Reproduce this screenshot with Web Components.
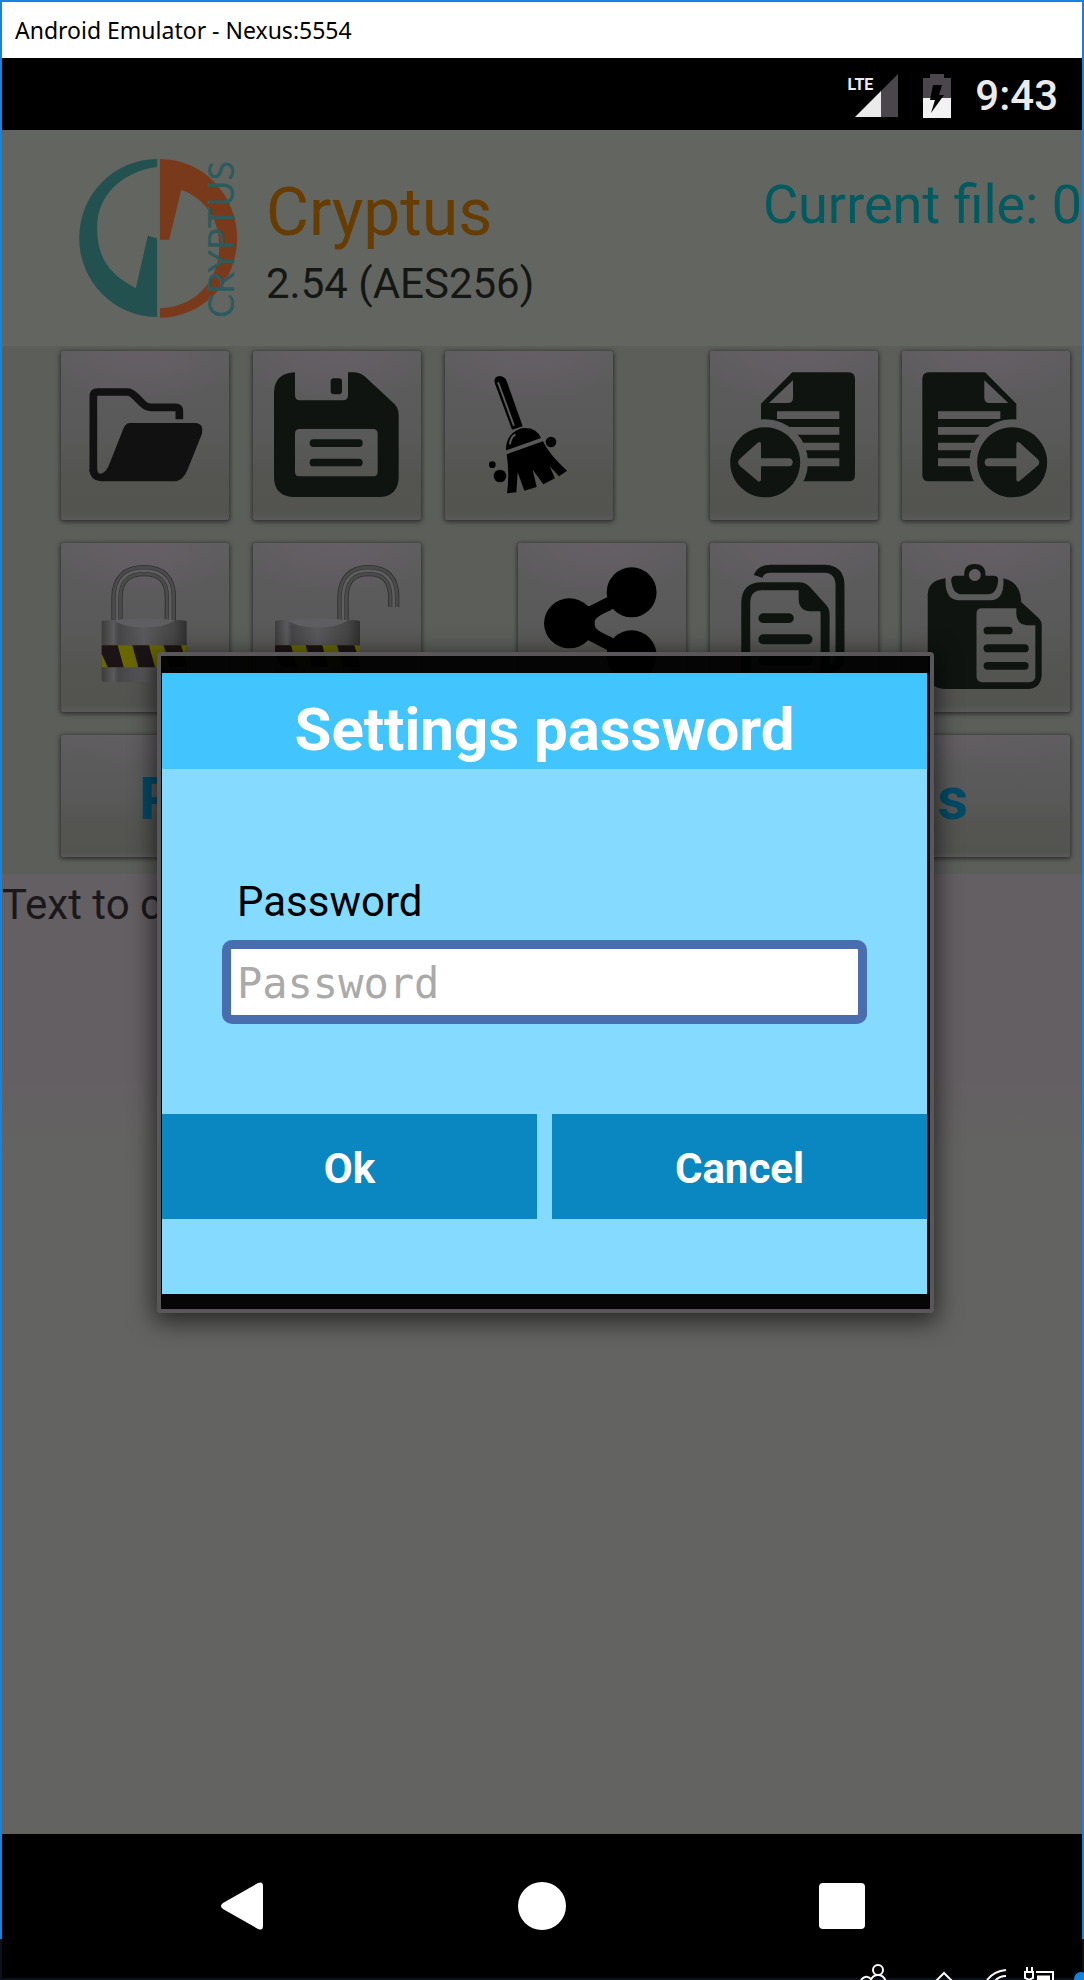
<!DOCTYPE html>
<html lang="en">
<head>
<meta charset="utf-8">
<meta name="viewport" content="width=device-width, initial-scale=1">
<title>Android Emulator - Nexus:5554</title>
<style>
  body {
    margin: 0;
    min-height: 100vh;
    display: flex;
    flex-direction: column;
    background: #000;
    font-family: Roboto, "Liberation Sans", sans-serif;
  }

  emulator-window {
    flex: 1;
  }
</style>
</head>
<body>
  <emulator-window label="Android Emulator - Nexus:5554">
    <status-bar slot="status" network="LTE" time="9:43"></status-bar>
    <app-header name="Cryptus" version="2.54 (AES256)" current="Current file: 0"></app-header>
    <tool-bar>
      <tool-row>
        <icon-button icon="open" label="Open"></icon-button>
        <icon-button icon="save" label="Save"></icon-button>
        <icon-button icon="clear" label="Clear"></icon-button>
        <icon-button icon="previous" label="Previous" class="push"></icon-button>
        <icon-button icon="next" label="Next"></icon-button>
      </tool-row>
      <tool-row>
        <icon-button icon="lock" label="Encrypt"></icon-button>
        <icon-button icon="unlock" label="Decrypt"></icon-button>
        <icon-button icon="share" label="Share" class="push"></icon-button>
        <icon-button icon="copy" label="Copy"></icon-button>
        <icon-button icon="paste" label="Paste"></icon-button>
      </tool-row>
      <tool-row>
        <text-button>P</text-button>
        <text-button align="end">s</text-button>
      </tool-row>
    </tool-bar>
    <text-pane>Text to c</text-pane>
    <password-dialog slot="dialog" heading="Settings password"></password-dialog>
    <nav-bar slot="nav"></nav-bar>
  </emulator-window>
  <task-tray></task-tray>

<script>
  const icons = {
    open: `
      <svg viewBox="35 32 504 507" fill="#111">
        <path d="M390 237V212Q390 201 378 201H305Q290 201 278 188L258 168Q246 155 234 155H145Q132 155 132 168V394" fill="none" stroke="#111" stroke-width="23"/>
        <path d="M243 248H440Q464 250 458 280L414 390Q400 423 374 423H154Q122 420 120 388H144Q144 400 154 400Q170 398 180 372L222 265Q228 248 243 248Z"/>
      </svg>`,
    save: `
      <svg viewBox="610 32 504 507" fill="#0f1410">
        <path fill-rule="evenodd" d="M736 96V165Q736 180 750 180H880Q895 180 895 165V96H910Q930 96 945 108L1035 192Q1047 205 1047 225V412Q1045 468 988 470H730Q673 466 673 410V155Q676 98 736 96ZM750 266Q736 266 736 280V394Q736 408 750 408H970Q984 408 984 394V280Q984 266 970 266Z"/>
        <rect x="843" y="114" width="34" height="48" rx="10"/>
        <rect x="780" y="297" width="159" height="23" rx="11"/>
        <rect x="780" y="355" width="159" height="23" rx="11"/>
      </svg>`,
    clear: `
      <svg viewBox="46 32 504 507">
        <path d="M196 130Q190 109 210 107Q226 108 231 122L279 258L247 268Z"/>
        <path d="M206 128L252 254" stroke="#595959" stroke-width="6" stroke-linecap="round"/>
        <path d="M229 330Q228 280 275 264Q318 258 334 293Z"/>
        <path d="M241 312Q242 292 257 282" fill="none" stroke="#595959" stroke-width="6"/>
        <path d="M231 342L340 303Q360 345 412 391L388 408L360 378L376 414L341 432L309 388L321 440L284 451L264 396L260 456L232 459Q240 400 231 342Z"/>
        <circle cx="364" cy="305" r="16"/>
        <circle cx="188" cy="373" r="10"/>
        <circle cx="211" cy="407" r="19"/>
      </svg>`,
    previous: `
      <svg viewBox="60 32 504 507">
        ${pageWithArrow()}
      </svg>`,
    next: `
      <svg viewBox="635 32 504 507">
        <g transform="translate(1191 0) scale(-1 1)">${pageWithArrow()}</g>
      </svg>`,
    lock: `
      <svg viewBox="35 38 504 507">
        ${shackle("M203 272V200Q205 121 284 121Q363 121 363 200V272")}
        ${lockBody(157)}
      </svg>`,
    unlock: `
      <svg viewBox="610 38 504 507">
        ${shackle("M880 272V200Q882 121 957 121Q1032 121 1032 200V230")}
        ${lockBody(676)}
      </svg>`,
    share: `
      <svg viewBox="48 38 451 507" preserveAspectRatio="none">
        <path d="M353 186L186 279L353 375" fill="none" stroke="#000" stroke-width="38"/>
        <path d="M225 225L300 238Q252 258 252 279Q254 304 302 322L225 330Z"/>
        <ellipse cx="353" cy="186" rx="67" ry="75"/>
        <ellipse cx="186" cy="279" rx="68" ry="75"/>
        <ellipse cx="353" cy="375" rx="67" ry="75"/>
      </svg>`,
    copy: `
      <svg viewBox="563 38 451 507" preserveAspectRatio="none" fill="#0f1410">
        <g fill="none" stroke="#0f1410" stroke-width="24">
          <path d="M692 138Q700 115 725 115H872Q912 118 912 165V380Q912 416 875 416"/>
          <path d="M659 440V215Q661 168 702 168H802Q814 168 824 180L866 232Q872 240 872 252V440"/>
        </g>
        <path d="M801 170L870 243H832Q801 240 801 205Z"/>
        <rect x="693" y="249" width="95" height="29" rx="14"/>
        <rect x="693" y="312" width="145" height="30" rx="14"/>
        <rect x="693" y="375" width="145" height="30" rx="14"/>
      </svg>`,
    paste: `
      <svg viewBox="1078 38 451 507" preserveAspectRatio="none" fill="#0f1410">
        <path fill-rule="evenodd" d="M1195 144Q1192 210 1232 210H1316Q1354 208 1350 144Q1396 155 1398 215L1444 262Q1453 272 1453 285V436Q1450 474 1415 476H1190Q1147 470 1147 425V190Q1150 150 1195 144ZM1293 234Q1278 234 1278 250V440Q1280 455 1293 456H1420Q1434 455 1436 440V285H1412Q1386 282 1385 250V234Z"/>
        <path fill-rule="evenodd" d="M1220 136H1245Q1243 102 1273 101Q1304 102 1302 136H1326Q1338 138 1336 152Q1332 192 1308 192H1236Q1214 190 1210 150Q1210 138 1220 136ZM1273 116A16 18 0 1 0 1274 116Z"/>
        <rect x="1297" y="289" width="78" height="23" rx="11"/>
        <rect x="1297" y="342" width="121" height="24" rx="11"/>
        <rect x="1297" y="395" width="121" height="23" rx="11"/>
      </svg>`
  };

  function pageWithArrow() {
    return `
      <mask id="page-cut" maskUnits="userSpaceOnUse" x="60" y="32" width="504" height="507">
        <rect x="60" y="32" width="504" height="507" fill="#fff"/>
        <path d="M309 120V172Q309 188 293 188H237Z"/>
        <path d="M261 213H448V236H261ZM261 260H448V283H261ZM261 307H448V330H261ZM261 354H448V378H261Z"/>
        <circle cx="225" cy="366" r="129"/>
      </mask>
      <path mask="url(#page-cut)" fill="#0f1410" d="M307 96H475Q495 96 495 116V403Q495 423 475 423H213V190Z"/>
      <path fill="#0f1410" fill-rule="evenodd" d="M225 261A105 105 0 1 0 226 261ZM144 366Q144 360 150 355L203 307Q213 302 213 312V354H298Q308 356 308 366Q308 377 298 378H213V418Q211 427 203 422L150 377Q144 372 144 366Z"/>`;
  }

  function shackle(d) {
    return `
      <g fill="none">
        <path d="${d}" stroke="#303030" stroke-width="34"/>
        <path d="${d}" stroke="#4b4b4b" stroke-width="29"/>
        <path d="${d}" stroke="#2e2e2e" stroke-width="11"/>
        <path d="${d}" stroke="#5e5e5e" stroke-width="8"/>
      </g>`;
  }

  // body is 255 wide; x is its left edge
  function lockBody(x) {
    return `
      <linearGradient id="steel">
        <stop offset="0" stop-color="#3c3c3c"/>
        <stop offset=".14" stop-color="#5a5a5c"/>
        <stop offset=".2" stop-color="#454547"/>
        <stop offset=".5" stop-color="#59595b"/>
        <stop offset=".85" stop-color="#454545"/>
        <stop offset="1" stop-color="#303030"/>
      </linearGradient>
      <g transform="translate(${x} 0)">
        <path fill="url(#steel)" d="M0 272Q40 264 60 278Q130 302 200 278Q220 264 255 272V448Q255 455 248 455H7Q0 455 0 448Z"/>
        <path fill="#5e5d60" d="M35 270Q128 258 220 270Q190 292 128 292Q65 292 35 270Z"/>
        <rect y="345" width="255" height="66" fill="#686700"/>
        <path fill="#1b1316" d="M0 345H48L66 411H18L0 370ZM92 345H142L160 411H110ZM186 345H238L255 400V411H204Z"/>
      </g>`;
  }

  class EmulatorWindow extends HTMLElement {
    constructor() {
      super();
      this.attachShadow({ mode: "open" });
    }

    connectedCallback() {
      this.shadowRoot.innerHTML = `
        <style>
          :host {
            display: flex;
            flex-direction: column;
            border: 2px solid #1783dc;
            border-bottom: 0;
          }

          .title {
            padding: 12px 13px;
            background: #fff;
            color: #000;
            font: 23px/32px "Noto Sans", "Open Sans", sans-serif;
          }

          .screen {
            position: relative;
            flex: 1;
            display: flex;
            flex-direction: column;
            overflow: hidden;
          }
        </style>

        <div class="title">${this.getAttribute("label")}</div>
        <slot name="status"></slot>
        <div class="screen">
          <slot></slot>
          <slot name="dialog"></slot>
        </div>
        <slot name="nav"></slot>
      `;
    }
  }

  class StatusBar extends HTMLElement {
    constructor() {
      super();
      this.attachShadow({ mode: "open" });
    }

    connectedCallback() {
      this.shadowRoot.innerHTML = `
        <style>
          :host {
            display: flex;
            align-items: center;
            justify-content: flex-end;
            gap: 24px;
            box-sizing: border-box;
            height: 72px;
            padding: 3px 24px 0 0;
            background: #000;
            color: #ebebeb;
          }

          svg {
            display: block;
          }

          .signal {
            display: flex;
            align-items: flex-start;
            margin-right: 1px;
          }

          .network {
            margin-right: -18px;
            font-size: 16px;
            font-weight: 700;
            line-height: 22px;
          }

          time {
            font-size: 42px;
            font-weight: 500;
            line-height: 50px;
          }
        </style>

        <div class="signal">
          <span class="network">${this.getAttribute("network")}</span>
          <svg width="43" height="43" viewBox="0 0 43 43">
            <path d="M43 0V43H26V17Z" fill="#4b464b"/>
            <path d="M26 17V43H0Z" fill="#ebebeb"/>
          </svg>
        </div>
        <svg width="28" height="44" viewBox="0 0 28 44">
          <path d="M7 0H21V4H28V24H0V4H7Z" fill="#4b464b"/>
          <path d="M0 24H28V44H0Z" fill="#f2f2f2"/>
          <path d="M10 11H19L16 21H21L8 39L12 26H7Z" fill="#000"/>
        </svg>
        <time>${this.getAttribute("time")}</time>
      `;
    }
  }

  class AppHeader extends HTMLElement {
    constructor() {
      super();
      this.attachShadow({ mode: "open" });
    }

    connectedCallback() {
      this.shadowRoot.innerHTML = `
        <style>
          :host {
            display: flex;
            align-items: flex-start;
            gap: 29px;
            padding: 29px 0 28px 77px;
            background: #636561;
            white-space: nowrap;
          }

          svg {
            flex: none;
            overflow: visible;
          }

          .names {
            padding-top: 16px;
          }

          h1, p {
            margin: 0;
            font-weight: 400;
          }

          h1 {
            margin-bottom: 8px;
            color: #673c00;
            font-size: 66px;
            line-height: 76px;
          }

          p {
            color: #141714;
            font-size: 42px;
            line-height: 50px;
          }

          .current {
            margin-left: auto;
            padding-top: 14px;
            color: #005a60;
            font-size: 54px;
            line-height: 64px;
          }
        </style>

        <svg width="158" height="159" viewBox="0 0 158 159">
          <g transform="scale(.355 .334) translate(-220 -478)">
            <path fill="#225150" d="M440 478A219 236 0 0 0 440 951V716L414 707L380 865C300 820 271 770 271 680C271 590 340 515 440 502Z"/>
            <path fill="#793a1b" d="M448 478A217 237 0 0 1 448 953V925C560 920 615 830 615 740C615 650 570 595 508 570L474 720H448Z"/>
          </g>
          <text transform="translate(155 159) rotate(-90)" font-family="Lato, sans-serif" font-size="36" fill="#2d5a5c">CRYPTUS</text>
        </svg>
        <div class="names">
          <h1>${this.getAttribute("name")}</h1>
          <p>${this.getAttribute("version")}</p>
        </div>
        <p class="current">${this.getAttribute("current")}</p>
      `;
    }
  }

  class ToolBar extends HTMLElement {
    constructor() {
      super();
      this.attachShadow({ mode: "open" });
      this.shadowRoot.innerHTML = `
        <style>
          :host {
            display: flex;
            flex-direction: column;
            gap: 23px;
            padding: 5px 12px 17px 59px;
            background: #5c5e5a;
          }
        </style>
        <slot></slot>
      `;
    }
  }

  class ToolRow extends HTMLElement {
    constructor() {
      super();
      this.attachShadow({ mode: "open" });
      this.shadowRoot.innerHTML = `
        <style>
          :host {
            display: flex;
            gap: 24px;
          }

          ::slotted(.push) {
            margin-left: auto;
          }
        </style>
        <slot></slot>
      `;
    }
  }

  const raised = `
    border: 0;
    border-radius: 3px;
    background:
      radial-gradient(ellipse 60% 30% at 50% 0, #665f66, transparent),
      linear-gradient(#5e5d5e, #595959 50%, #545551 75%, #535450 96%, #5a5a5a);
    box-shadow: 0 1px 4px 1px rgba(0, 0, 0, .5);
  `;

  class IconButton extends HTMLElement {
    constructor() {
      super();
      this.attachShadow({ mode: "open" });
    }

    connectedCallback() {
      this.shadowRoot.innerHTML = `
        <style>
          :host {
            display: block;
          }

          button {
            ${raised}
            display: block;
            width: 168px;
            height: 169px;
            padding: 0;
          }

          svg {
            display: block;
            width: 100%;
            height: 100%;
          }
        </style>

        <button type="button" aria-label="${this.getAttribute("label")}">
          ${icons[this.getAttribute("icon")]}
        </button>
      `;
    }
  }

  class TextButton extends HTMLElement {
    constructor() {
      super();
      this.attachShadow({ mode: "open" });
      this.shadowRoot.innerHTML = `
        <style>
          :host {
            display: block;
            flex: 1;
          }

          button {
            ${raised}
            display: block;
            width: 100%;
            height: 122px;
            padding: 6px 102px 0 78px;
            color: #004b66;
            font: 700 60px/70px Roboto, sans-serif;
            text-align: left;
          }

          :host([align="end"]) button {
            text-align: right;
          }
        </style>
        <button type="button"><slot></slot></button>
      `;
    }
  }

  class TextPane extends HTMLElement {
    constructor() {
      super();
      this.attachShadow({ mode: "open" });
      this.shadowRoot.innerHTML = `
        <style>
          :host {
            display: block;
            flex: 1;
            padding: 6px 0;
            background: linear-gradient(#645f63 200px, #636461 290px);
            color: #1a181a;
            font-size: 42px;
            line-height: 50px;
          }
        </style>
        <slot></slot>
      `;
    }
  }

  class PasswordDialog extends HTMLElement {
    constructor() {
      super();
      this.attachShadow({ mode: "open" });
    }

    connectedCallback() {
      this.shadowRoot.innerHTML = `
        <style>
          :host {
            position: absolute;
            inset: 0;
            display: grid;
            align-items: center;
            padding: 0 148px 0 155px;
          }

          .frame {
            padding: 17px 3px 15px 1px;
            border: 4px solid #5a575a;
            border-radius: 4px;
            background: rgba(0, 0, 0, .94);
            background-clip: padding-box;
            box-shadow: 0 6px 24px 3px rgba(0, 0, 0, .6);
          }

          h2 {
            margin: 0;
            padding: 22px 0 4px;
            background: #42c5ff;
            color: #fff;
            font-size: 60px;
            line-height: 70px;
            text-align: center;
          }

          form {
            padding: 108px 0 75px;
            background: #84daff;
          }

          .field {
            display: flex;
            flex-direction: column;
            gap: 13px;
            padding: 0 60px 90px;
          }

          label {
            padding-left: 15px;
            color: #000;
            font-size: 42px;
            line-height: 50px;
          }

          input {
            box-sizing: border-box;
            width: 100%;
            height: 84px;
            padding: 3px 6px 0;
            border: 9px solid #496eaf;
            border-radius: 10px;
            background: #fff;
            color: #000;
            font: 42px "DejaVu Sans Mono", monospace;
          }

          input::placeholder {
            color: #aaa;
          }

          .actions {
            display: flex;
            gap: 15px;
          }

          .actions button {
            flex: 1;
            height: 105px;
            padding: 6px 0 0;
            border: 0;
            background: #0a86c0;
            color: #fff;
            font: 700 42px/50px Roboto, sans-serif;
          }
        </style>

        <div class="frame" role="dialog" aria-labelledby="heading">
          <h2 id="heading">${this.getAttribute("heading")}</h2>
          <form>
            <div class="field">
              <label for="password">Password</label>
              <input id="password" type="password" placeholder="Password">
            </div>
            <div class="actions">
              <button type="button">Ok</button>
              <button type="button">Cancel</button>
            </div>
          </form>
        </div>
      `;
    }
  }

  class NavBar extends HTMLElement {
    constructor() {
      super();
      this.attachShadow({ mode: "open" });
      this.shadowRoot.innerHTML = `
        <style>
          :host {
            display: flex;
            justify-content: center;
            gap: 252px;
            padding: 48px 0 9px;
            background: #000;
          }

          button {
            padding: 0;
            border: 0;
            background: none;
          }

          svg {
            display: block;
          }
        </style>

        <button type="button" aria-label="Back">
          <svg width="48" height="48" fill="#fff"><path d="M5 21L40 1Q45 -1 45 4V44Q45 49 40 47L5 27Q1 24 5 21Z"/></svg>
        </button>
        <button type="button" aria-label="Home">
          <svg width="48" height="48" fill="#fff"><circle cx="24" cy="24" r="24"/></svg>
        </button>
        <button type="button" aria-label="Overview">
          <svg width="48" height="48" fill="#fff"><rect x="1" y="1" width="46" height="46" rx="4"/></svg>
        </button>
      `;
    }
  }

  class TaskTray extends HTMLElement {
    constructor() {
      super();
      this.attachShadow({ mode: "open" });
      this.shadowRoot.innerHTML = `
        <style>
          :host {
            display: flex;
            justify-content: flex-end;
            align-items: flex-end;
            height: 41px;
            background: linear-gradient(#000 39px, #07121c 39px);
            box-shadow: inset 2px 0 #07121c, inset -2px 0 #07121c;
            overflow: hidden;
          }

          svg {
            display: block;
          }
        </style>

        <svg width="224" height="17" viewBox="860 1963 224 17" fill="none" stroke="#fff" stroke-width="2">
          <circle cx="878" cy="1970" r="5"/>
          <path d="M870 1982Q872 1975 878 1975T886 1982M861 1980Q866 1974 871 1979"/>
          <path d="M936 1981L944 1973L952 1981"/>
          <path d="M987 1980Q994 1971 1006 1970M995 1981Q999 1976 1006 1976"/>
          <path d="M1027 1967V1972M1032 1967V1972M1025 1972H1033V1978L1029 1980L1025 1978ZM1036 1972H1053V1980"/>
          <path d="M1037 1978H1050" stroke-width="5"/>
          <circle cx="1081" cy="1979" r="6" fill="#1783dc" stroke="#1783dc"/>
        </svg>
      `;
    }
  }

  customElements.define("emulator-window", EmulatorWindow);
  customElements.define("status-bar", StatusBar);
  customElements.define("app-header", AppHeader);
  customElements.define("tool-bar", ToolBar);
  customElements.define("tool-row", ToolRow);
  customElements.define("icon-button", IconButton);
  customElements.define("text-button", TextButton);
  customElements.define("text-pane", TextPane);
  customElements.define("password-dialog", PasswordDialog);
  customElements.define("nav-bar", NavBar);
  customElements.define("task-tray", TaskTray);
</script>
</body>
</html>
